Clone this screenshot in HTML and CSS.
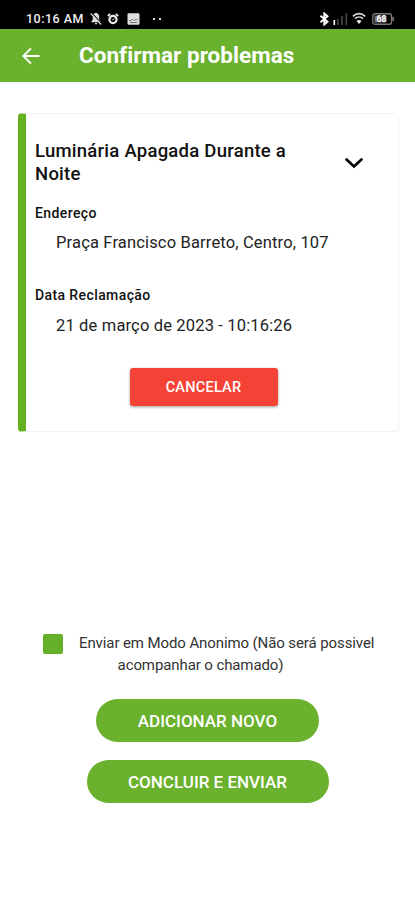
FILE: index.html
```
<!DOCTYPE html>
<html lang="pt-BR">
<head>
    <meta charset="UTF-8">
    <meta name="viewport" content="width=device-width, initial-scale=1.0">
    <title>Confirmar problemas</title>
    <link rel="stylesheet" href="styles.css">
</head>
<body>
    <div class="status-bar">
        <span class="clock">10:16 AM</span>
        <svg class="icon-bell" width="12" height="13" viewBox="0 0 12 13">
            <path d="M6 .8C3.800 1.300 2.800 3 2.800 5v2.500L1 10.300h10L9.200 7.500V5C9.200 3 8.200 1.300 6 .8zM4.500 11h3L6 12.700z" fill="#ddd"/>
            <path d="M2 1.300l9.500 10" stroke="#000" stroke-width="1.200"/>
            <path d="M.8 1.500l10.400 11" stroke="#ddd" stroke-width="1.200"/>
        </svg>
        <svg class="icon-alarm" width="12" height="12" viewBox="0 0 12 12">
            <path d="M.8 3L3.200 1M11.200 3L8.800 1" stroke="#eee" stroke-width="1.700"/>
            <circle cx="6" cy="6.500" r="3.600" fill="none" stroke="#eee" stroke-width="2.200"/>
            <path d="M4.500 6l1.500 1L7.500 5" fill="none" stroke="#ccc" stroke-width=".9"/>
        </svg>
        <svg class="icon-image" width="13" height="12" viewBox="0 0 13 12">
            <rect x=".5" y=".3" width="12" height="11.500" rx="1.200" fill="#ddd"/>
            <path d="M2 7.500h2l1.500-1 2 1 2-1.500L11 7.500M3 9.500h7" fill="none" stroke="#777" stroke-width="1"/>
        </svg>
        <span class="dots"><i></i><i></i></span>
        <div class="status-right">
            <svg width="11" height="14" viewBox="0 0 11 14">
                <path d="M1.500 3.800l7 6L5.300 12.500V1.500l3.200 2.800-7 6" fill="none" stroke="#fff" stroke-width="1.900"/>
            </svg>
            <svg class="icon-signal" width="15" height="14" viewBox="0 0 15 14">
                <path d="M1.300 8v5" stroke="#fff" stroke-width="1.600"/>
                <path d="M4.800 7v6M9 4v9M13.300 1v12" stroke="#444" stroke-width="1.700"/>
            </svg>
            <svg class="icon-wifi" width="14" height="13" viewBox="0 0 14 13">
                <path d="M1 4.300C4.300.8 9.700.8 13 4.300M3 6.700c2.300-2.300 5.700-2.300 8 0" fill="none" stroke="#ddd" stroke-width="1.700"/>
                <path d="M4.500 9c1.500-1.300 3.500-1.300 5 0L7 12z" fill="#eee"/>
            </svg>
            <svg class="icon-battery" width="24" height="12" viewBox="0 0 24 12">
                <rect x=".8" y=".8" width="18.700" height="10.400" rx="2" fill="none" stroke="#777" stroke-width="1.400"/>
                <rect x="2.500" y="2.500" width="12" height="7" fill="#777"/>
                <path d="M21.200 4v4" stroke="#777" stroke-width="1.800"/>
                <text x="4.500" y="9.200" class="battery-level">68</text>
            </svg>
        </div>
    </div>

    <header class="app-bar">
        <svg class="back" width="18" height="18" viewBox="0 0 18 18">
            <path d="M17.500 9H1.600M9 1.300L1.300 9 9 16.700" fill="none" stroke="#fff" stroke-width="1.900"/>
        </svg>
        <h1>Confirmar problemas</h1>
    </header>

    <main>
        <section class="card">
            <div class="card-header">
                <h2>Luminária Apagada Durante a Noite</h2>
                <svg class="chevron" width="20" height="12" viewBox="0 0 20 12">
                    <path d="M1.700 1.700L10 9.500l8.300-7.800" fill="none" stroke="#000" stroke-width="2.600"/>
                </svg>
            </div>
            <h3>Endereço</h3>
            <p class="address">Praça Francisco Barreto, Centro, 107</p>
            <h3>Data Reclamação</h3>
            <p class="date">21 de março de 2023 - 10:16:26</p>
            <button class="cancel">CANCELAR</button>
        </section>

        <label class="anonymous">
            <span class="checkbox"></span>Enviar em Modo Anonimo (Não será possivel<br>acompanhar o chamado)
        </label>

        <div class="actions">
            <button class="pill add">ADICIONAR NOVO</button>
            <button class="pill send">CONCLUIR E ENVIAR</button>
        </div>
    </main>
</body>
</html>
```
FILE: styles.css
```
* {
    box-sizing: border-box;
    margin: 0;
    padding: 0;
}

body {
    font-family: Roboto, sans-serif;
    background: #fff;
    color: #111;
}

button {
    display: block;
    border: none;
    font-family: inherit;
    color: #fff;
    white-space: nowrap;
}

.status-bar {
    display: flex;
    align-items: center;
    height: 29px;
    padding: 8px 19px 0 26px;
    background: #000;
    color: #eee;
}

.clock {
    width: 58px;
    font-size: 12.5px;
    font-weight: 500;
    letter-spacing: 0.5px;
    white-space: nowrap;
}

.icon-bell {
    margin-left: 6px;
}

.icon-alarm {
    margin-left: 5px;
}

.icon-image {
    margin-left: 8px;
}

.dots {
    display: flex;
    gap: 4px;
    margin-left: 13px;
}

.dots i {
    width: 2px;
    height: 2px;
    background: #ddd;
}

.status-right {
    display: flex;
    align-items: center;
    margin-left: auto;
}

.icon-signal {
    margin-left: 3px;
}

.icon-wifi {
    margin-left: 4px;
}

.icon-battery {
    margin-left: 6px;
}

.battery-level {
    font-size: 8.5px;
    font-weight: 700;
    fill: #fff;
}

.app-bar {
    display: flex;
    align-items: center;
    height: 53px;
    padding-left: 22px;
    background: #6ab12d;
    color: #fff;
}

.app-bar h1 {
    margin-left: 39px;
    padding-bottom: 2px;
    font-size: 22.5px;
    font-weight: 700;
    letter-spacing: 0.03px;
    white-space: nowrap;
}

.card {
    width: 381px;
    height: 319px;
    margin: 31px 0 0 18px;
    padding: 26px 0 0 9px;
    border: 1px solid #f2f2f2;
    border-left: 8px solid #64b31e;
    border-radius: 4px;
}

.card-header {
    display: flex;
    align-items: center;
    height: 46px;
}

.card h2 {
    width: 300px;
    padding-right: 30px;
    font-size: 18.5px;
    font-weight: 500;
    line-height: 23px;
    letter-spacing: 0.25px;
}

.chevron {
    margin-left: 9px;
}

.card h3 {
    font-size: 14px;
    font-weight: 500;
    line-height: 20px;
    letter-spacing: 0.4px;
}

.card-header + h3 {
    margin-top: 17px;
}

.card p {
    margin-left: 21px;
    font-size: 16.5px;
    line-height: 22px;
    letter-spacing: 0.16px;
    white-space: nowrap;
    color: #222;
}

.address {
    margin: 9px 0 31px;
}

.date {
    margin-top: 10px;
}

.cancel {
    width: 148px;
    height: 38px;
    margin: 31px 0 0 94.5px;
    border-radius: 3px;
    background: #f44336;
    font-size: 14.5px;
    font-weight: 500;
    letter-spacing: 0.25px;
    box-shadow: 0 1px 3px rgba(0, 0, 0, 0.4);
}

/* the box sits inline so the second line centres under the whole row */
.anonymous {
    display: block;
    width: 347px;
    margin: 200px 0 0 27px;
    font-size: 15px;
    line-height: 22px;
    letter-spacing: -0.1px;
    text-align: center;
    white-space: nowrap;
    color: #333;
}

.checkbox {
    display: inline-block;
    width: 20px;
    height: 20px;
    margin: 2px 16px 0;
    border-radius: 2px;
    background: #64b02a;
    vertical-align: top;
}

.actions {
    display: flex;
    flex-direction: column;
    align-items: center;
    gap: 18px;
    margin-top: 23px;
}

.pill {
    height: 43px;
    border-radius: 22px;
    background: #6ab12d;
    font-size: 17px;
    font-weight: 500;
}

.add {
    width: 223px;
}

.send {
    width: 242px;
}
```
